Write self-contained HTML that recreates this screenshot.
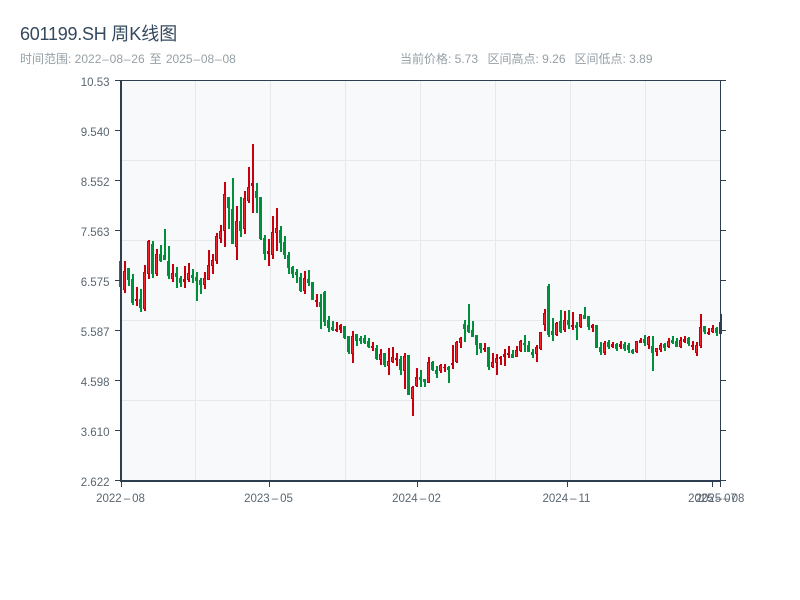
<!DOCTYPE html>
<html><head><meta charset="utf-8"><style>
html,body{margin:0;padding:0;background:#fff;width:800px;height:600px;overflow:hidden}
svg{display:block}
text{font-family:"Liberation Sans","Noto Sans CJK SC",sans-serif}
.y{font-size:11.5px;fill:#5a6672;text-anchor:end}
.x{font-size:11.5px;fill:#5a6672;text-anchor:middle}
.s{font-size:12px;fill:#95a0a6}
</style></head><body>
<svg width="800" height="600" viewBox="0 0 800 600" xmlns="http://www.w3.org/2000/svg">
<rect width="800" height="600" fill="#fff"/>
<text x="20" y="40" font-size="18" fill="#34495e"><tspan letter-spacing="-0.25">601199.SH </tspan>周K线图</text>
<text class="s" x="20" y="63">时间范围: 2022<tspan dx="0.8">–</tspan><tspan dx="0.8">08</tspan><tspan dx="0.8">–</tspan><tspan dx="0.8">26</tspan><tspan dx="1.5"> 至 </tspan><tspan dx="1">2025</tspan><tspan dx="0.8">–</tspan><tspan dx="0.8">08</tspan><tspan dx="0.8">–</tspan><tspan dx="0.8">08</tspan></text>
<text class="s" x="400" y="63">当前价格: 5.73</text>
<text class="s" x="487.500" y="63">区间高点: 9.26</text>
<text class="s" x="574.500" y="63">区间低点: 3.89</text>
<rect x="121" y="81" width="600" height="400" fill="#f8f9fa"/>
<g stroke="#e6e8ec" stroke-width="1" shape-rendering="crispEdges" fill="none">
<path d="M195.500 81V481M270.500 81V481M345.500 81V481M420.500 81V481M495.500 81V481M570.500 81V481M645.500 81V481"/>
<path d="M121 160.500H721M121 240.500H721M121 320.500H721M121 400.500H721"/>
</g>
<g fill="none" shape-rendering="crispEdges">
<path stroke="#008f3a" stroke-width="2" d="M121 261V287M129 268V286M133 274V305M141 289V312M153 241V278M161 245V262M165 229V260M169 246V279M177 267V288M181 276V287M193 269V283M197 272V301M201 278V294M229 197V229M233 178V244M241 197V237M257 183V213M261 197V240M265 235V260M281 226V252M285 236V259M289 252V274M293 266V278M297 269V283M301 273V292M309 270V286M313 282V300M321 294V329M325 291V326M329 316V332M333 321V331M345 326V339M349 336V354M357 334V346M361 336V344M365 335V344M369 338V348M377 345V360M385 353V367M401 356V375M409 355V395M421 370V387M425 379V387M433 361V371M437 366V378M449 366V383M465 320V342M469 304V333M473 321V337M477 335V355M481 343V353M489 347V370M513 350V358M525 335V352M529 341V352M533 349V358M549 284V337M553 318V341M561 310V333M569 310V329M577 322V340M585 307V319M589 316V330M597 325V348M601 342V355M609 340V349M617 343V351M625 342V351M629 343V353M633 349V354M645 335V346M653 336V371M665 343V351M673 336V344M677 338V347M689 337V346M705 326V334M717 327V336"/>
<path stroke="#008f3a" stroke-width="3" d="M120.500 261V287M128.500 268V280M132.500 279V303M140.500 299V308M152.500 244V274M160.500 254V261M164.500 255V260M168.500 261V276M176.500 273V277M180.500 278V283M192.500 275V278M196.500 277V281M200.500 280V285M228.500 197V208M232.500 209V244M240.500 221V231M256.500 191V198M260.500 197V239M264.500 238V254M280.500 230V243M284.500 242V255M288.500 255V268M292.500 267V274M296.500 272V275M300.500 277V291M308.500 279V283M312.500 282V300M320.500 302V307M324.500 292V322M328.500 320V328M332.500 327V330M344.500 326V338M348.500 336V352M356.500 334V341M360.500 338V341M364.500 338V343M368.500 341V347M376.500 348V359M384.500 353V365M400.500 359V370M408.500 355V395M420.500 377V380M424.500 379V382M432.500 362V370M436.500 370V374M448.500 367V370M464.500 324V329M468.500 325V332M472.500 330V337M476.500 335V345M480.500 343V349M488.500 347V367M512.500 354V358M524.500 343V345M528.500 345V352M532.500 352V355M548.500 286V335M552.500 331V335M560.500 321V332M568.500 320V325M576.500 325V328M584.500 315V319M588.500 316V327M596.500 325V348M600.500 347V352M608.500 342V347M616.500 344V349M624.500 344V349M628.500 345V350M632.500 350V353M644.500 339V343M652.500 346V353M664.500 344V348M672.500 340V343M676.500 341V347M688.500 338V344M704.500 326V332M716.500 328V333"/>
<path stroke="#c8000e" stroke-width="2" d="M125 261V293M137 287V306M145 265V311M149 240V279M157 249V276M173 264V282M185 266V288M189 263V282M205 272V289M209 250V280M213 254V274M217 233V264M221 225V243M225 182V247M237 206V260M245 191V234M249 167V203M253 144V213M269 239V266M273 216V259M277 208V251M305 271V294M317 294V307M337 322V332M341 324V333M353 331V363M373 342V351M381 349V365M389 348V375M393 347V363M397 353V366M405 353V389M413 386V416M417 368V387M429 357V383M441 364V373M445 364V372M453 345V369M457 341V363M461 337V348M485 343V352M493 353V368M497 354V375M501 356V365M505 349V366M509 346V358M517 346V357M521 340V352M537 345V362M541 332V350M545 309V331M557 322V336M565 311V332M573 312V330M581 314V328M593 324V332M605 341V355M613 342V348M621 341V349M637 341V353M641 338V343M649 336V349M657 348V356M661 343V352M669 338V348M681 337V348M685 336V343M693 341V350M697 342V356M701 314V348M709 328V335M713 325V333M721 314V334"/>
<path stroke="#c8000e" stroke-width="3" d="M124.500 271V290M136.500 299V301M144.500 272V309M148.500 241V274M156.500 254V274M172.500 273V279M184.500 279V282M188.500 273V280M204.500 278V285M208.500 265V280M212.500 260V266M216.500 236V261M220.500 231V239M224.500 194V231M236.500 221V247M244.500 198V229M248.500 187V201M252.500 183V186M268.500 251V254M272.500 232V255M276.500 228V233M304.500 278V291M316.500 300V302M336.500 329V331M340.500 325V330M352.500 336V354M372.500 346V348M380.500 354V360M388.500 361V366M392.500 357V362M396.500 358V360M404.500 356V371M412.500 387V399M416.500 377V386M428.500 362V383M440.500 365V371M444.500 367V368M452.500 363V365M456.500 342V362M460.500 338V343M484.500 348V350M492.500 362V367M496.500 358V363M500.500 357V359M504.500 354V357M508.500 353V355M516.500 350V357M520.500 341V351M536.500 347V354M540.500 332V349M544.500 313V325M556.500 323V335M564.500 320V330M572.500 325V327M580.500 314V327M592.500 325V328M604.500 343V353M612.500 344V347M620.500 344V347M636.500 341V352M640.500 340V343M648.500 337V345M656.500 348V352M660.500 345V350M668.500 341V347M680.500 340V347M684.500 339V342M692.500 345V347M696.500 345V353M700.500 327V346M708.500 332V334M712.500 328V332M720.500 322V334"/>
<path stroke="#f5222a" stroke-width="1" d="M124.500 272V289M144.500 273V308M148.500 242V273M156.500 255V273M172.500 274V278M188.500 274V279M204.500 279V284M208.500 266V279M212.500 261V265M216.500 237V260M220.500 232V238M224.500 195V230M236.500 222V246M244.500 199V228M248.500 188V200M272.500 233V254M276.500 229V232M304.500 279V290M352.500 337V353M380.500 355V359M388.500 362V365M392.500 358V361M404.500 357V370M412.500 388V398M416.500 378V385M428.500 363V382M440.500 366V370M456.500 343V361M460.500 339V342M492.500 363V366M496.500 359V362M516.500 351V356M520.500 342V350M536.500 348V353M540.500 333V348M544.500 314V324M556.500 324V334M564.500 321V329M580.500 315V326M604.500 344V352M636.500 342V351M648.500 338V344M656.500 349V351M660.500 346V349M668.500 342V346M680.500 341V346M696.500 346V352M700.500 328V345M712.500 329V331"/>
</g>
<g fill="#2c3e50" shape-rendering="crispEdges">
<rect x="120" y="81" width="2" height="401"/>
<rect x="120" y="480" width="601" height="2"/>
<rect x="115" y="80" width="611" height="1"/>
<rect x="720" y="80" width="1" height="402"/>
<path d="M115 130h5v1h-5zM115 180h5v1h-5zM115 230h5v1h-5zM115 280h5v1h-5zM115 330h5v1h-5zM115 380h5v1h-5zM115 430h5v1h-5zM115 480h5v1h-5zM721 130h5v1h-5zM721 180h5v1h-5zM721 230h5v1h-5zM721 280h5v1h-5zM721 330h5v1h-5zM721 380h5v1h-5zM721 430h5v1h-5zM721 480h5v1h-5z"/>
<path d="M121 482h1v5h-1zM269 482h1v5h-1zM417 482h1v5h-1zM567 482h1v5h-1zM712 482h1v5h-1zM720 482h1v5h-1z"/>
</g>
<text class="y" x="109.500" y="86">10.53</text>
<text class="y" x="109.500" y="136">9.540</text>
<text class="y" x="109.500" y="186">8.552</text>
<text class="y" x="109.500" y="236">7.563</text>
<text class="y" x="109.500" y="286">6.575</text>
<text class="y" x="109.500" y="336">5.587</text>
<text class="y" x="109.500" y="386">4.598</text>
<text class="y" x="109.500" y="436">3.610</text>
<text class="y" x="109.500" y="486">2.622</text>
<text class="x" x="120.500" y="502">2022<tspan dx="2">–</tspan><tspan dx="2">08</tspan></text>
<text class="x" x="268.500" y="502">2023<tspan dx="2">–</tspan><tspan dx="2">05</tspan></text>
<text class="x" x="416.500" y="502">2024<tspan dx="2">–</tspan><tspan dx="2">02</tspan></text>
<text class="x" x="566.500" y="502">2024<tspan dx="2">–</tspan><tspan dx="2">11</tspan></text>
<text class="x" x="712.500" y="502">2025<tspan dx="2">–</tspan><tspan dx="2">07</tspan></text>
<text class="x" x="720" y="502">2025<tspan dx="2">–</tspan><tspan dx="2">08</tspan></text>
</svg>
</body></html>
